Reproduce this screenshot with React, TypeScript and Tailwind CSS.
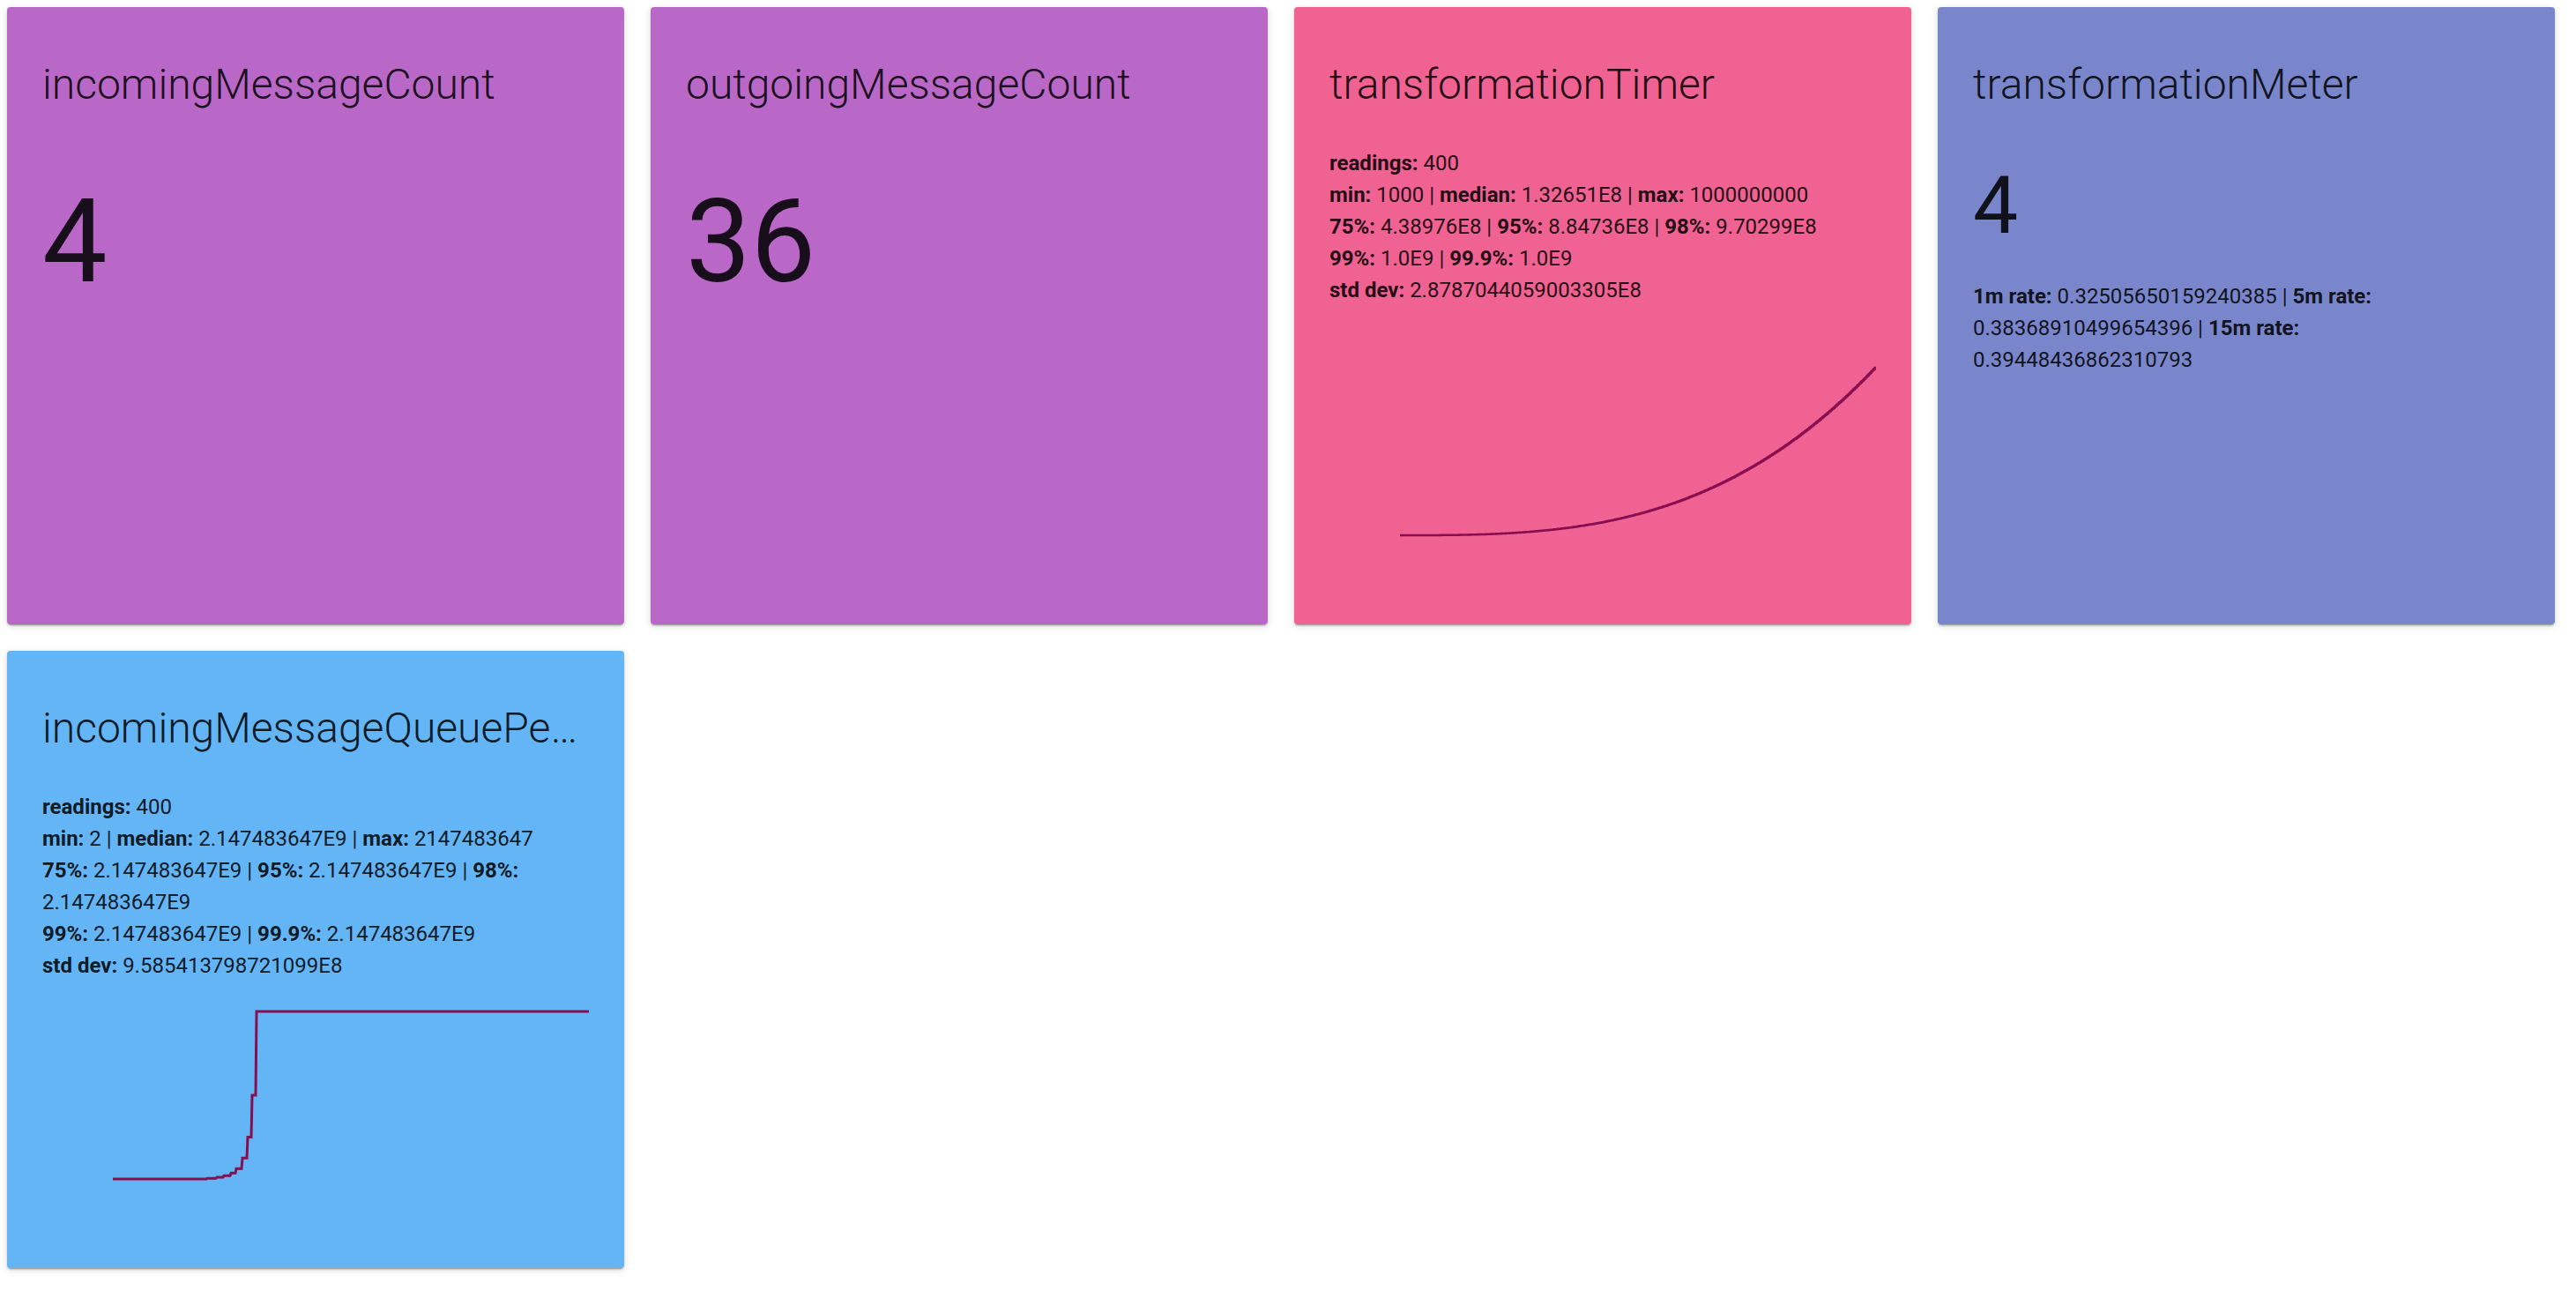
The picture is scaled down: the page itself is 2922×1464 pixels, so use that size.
import React from "react";

const LINE = "#880E4F";

// sorted timer readings follow roughly a cubic curve
const timerPath = (() => {
  const n = 400;
  const vals = Array.from({ length: n }, (_, i) => Math.pow((i + 1) / n, 3));
  const min = vals[0];
  const max = vals[n - 1];
  const y = (v: number) => 199 - (190 * (v - min)) / (max - min);
  let d = `M80 ${y(vals[0]).toFixed(2)}`;
  for (let i = 0; i < n; i++) {
    const x1 = 80 + (540 * (i + 1)) / n;
    d += ` H${x1.toFixed(2)}`;
    if (i + 1 < n) d += ` V${y(vals[i + 1]).toFixed(2)}`;
  }
  return d;
})();

// queue size readings: mostly maxed out, a few doubling steps before that
const queuePath = (() => {
  const steps: [number, number][] = [
    [186, 0.004],
    [197, 0.01],
    [205, 0.02],
    [213, 0.035],
    [219, 0.062],
    [226, 0.125],
    [232, 0.25],
    [237, 0.5],
    [242, 1],
  ];
  const y = (v: number) => 199 - 190 * v;
  let d = "M80 199";
  for (const [x, v] of steps) {
    d += ` H${x} L${x + 1} ${y(v).toFixed(2)}`;
  }
  d += " H620";
  return d;
})();

type CardProps = {
  title: string;
  bg: string;
  children?: React.ReactNode;
};

const Card = ({ title, bg, children }: CardProps) => (
  <div
    className={`flex h-[700px] w-[700px] flex-col overflow-hidden rounded-[4px] px-[40px] pb-[40px] pt-[60px] text-black/87 shadow-[0_2px_2px_0_rgba(0,0,0,0.14),0_3px_1px_-2px_rgba(0,0,0,0.2),0_2px_8px_0_rgba(0,0,0,0.14)] ${bg}`}
  >
    <h2 className="truncate text-[48px] font-light leading-[56px]">{title}</h2>
    {children}
  </div>
);

const Stat = ({ label, value }: { label: string; value: string }) => (
  <>
    <b className="font-bold">{label}</b> {value}
  </>
);

const Sep = () => <> | </>;

const Chart = ({ d, width }: { d: string; width: number }) => (
  <svg width="620" height="260" viewBox="0 0 620 260" className="mt-auto block shrink-0">
    <path d={d} fill="none" stroke={LINE} strokeWidth={width} />
  </svg>
);

export default function App() {
  return (
    <div className="min-h-screen bg-white pl-[8px] pt-[8px] font-['Roboto','Liberation_Sans',sans-serif]">
      <div className="grid grid-cols-[repeat(4,700px)] gap-[30px]">
        <Card title="incomingMessageCount" bg="bg-[#BA68C8]">
          <div className="mt-[85px] text-[131px] leading-[131px]">4</div>
        </Card>
        <Card title="outgoingMessageCount" bg="bg-[#BA68C8]">
          <div className="mt-[85px] text-[131px] leading-[131px]">36</div>
        </Card>
        <Card title="transformationTimer" bg="bg-[#F06292]">
          <div className="mt-[43px] text-[24px] leading-[36px]">
            <div>
              <Stat label="readings:" value="400" />
            </div>
            <div>
              <Stat label="min:" value="1000" />
              <Sep />
              <Stat label="median:" value="1.32651E8" />
              <Sep />
              <Stat label="max:" value="1000000000" />
            </div>
            <div>
              <Stat label="75%:" value="4.38976E8" />
              <Sep />
              <Stat label="95%:" value="8.84736E8" />
              <Sep />
              <Stat label="98%:" value="9.70299E8" />
            </div>
            <div>
              <Stat label="99%:" value="1.0E9" />
              <Sep />
              <Stat label="99.9%:" value="1.0E9" />
            </div>
            <div>
              <Stat label="std dev:" value="2.8787044059003305E8" />
            </div>
          </div>
          <Chart d={timerPath} width={2.5} />
        </Card>
        <Card title="transformationMeter" bg="bg-[#7986CB]">
          <div className="mt-[64px] text-[91px] leading-[91px]">4</div>
          <div className="mt-[39px] text-[24px] leading-[36px]">
            <Stat label="1m rate:" value="0.32505650159240385" />
            <Sep />
            <Stat label="5m rate:" value="0.38368910499654396" />
            <Sep />
            <Stat label="15m rate:" value="0.39448436862310793" />
          </div>
        </Card>
        <Card title="incomingMessageQueuePercentiles" bg="bg-[#64B5F6]">
          <div className="mt-[43px] text-[24px] leading-[36px]">
            <div>
              <Stat label="readings:" value="400" />
            </div>
            <div>
              <Stat label="min:" value="2" />
              <Sep />
              <Stat label="median:" value="2.147483647E9" />
              <Sep />
              <Stat label="max:" value="2147483647" />
            </div>
            <div>
              <Stat label="75%:" value="2.147483647E9" />
              <Sep />
              <Stat label="95%:" value="2.147483647E9" />
              <Sep />
              <Stat label="98%:" value="2.147483647E9" />
            </div>
            <div>
              <Stat label="99%:" value="2.147483647E9" />
              <Sep />
              <Stat label="99.9%:" value="2.147483647E9" />
            </div>
            <div>
              <Stat label="std dev:" value="9.585413798721099E8" />
            </div>
          </div>
          <Chart d={queuePath} width={3} />
        </Card>
      </div>
    </div>
  );
}
